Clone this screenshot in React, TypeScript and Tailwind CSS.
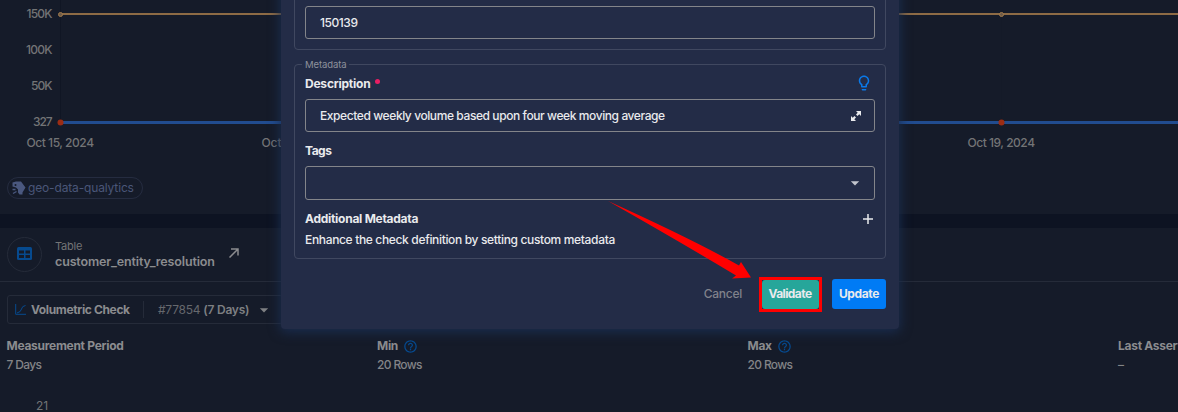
import React from "react";
import { MdOutlineLightbulb, MdHelpOutline, MdArrowDropDown } from "react-icons/md";

const SERIES_X = [60, 1001];

function Chart() {
  return (
    <svg width="1178" height="160" className="block shrink-0 text-[12px] font-medium">
      <line x1="60.5" y1="0" x2="60.5" y2="122" stroke="#101624" />
      <line x1="1001.5" y1="14" x2="1001.5" y2="122" stroke="#141a28" />
      <line x1="60" y1="14" x2="1178" y2="14" stroke="#8d6b45" strokeWidth="2" />
      <line x1="60" y1="122.5" x2="1178" y2="122.5" stroke="#214c8f" strokeWidth="3" />
      {SERIES_X.map((x) => (
        <g key={x}>
          <circle cx={x + 0.5} cy="14.5" r="2" fill="#6e5b48" stroke="#a07a4c" />
          <circle cx={x + 0.5} cy="122.5" r="3" fill="#9c2c13" />
        </g>
      ))}
      <g fill="#737476">
        <text x="26.5" y="18.300" textLength="26">150K</text>
        <text x="26" y="54.300" textLength="26.500">100K</text>
        <text x="31" y="90.300" textLength="21.500">50K</text>
        <text x="33" y="126.300" textLength="19.500">327</text>
      </g>
      <g fill="#737476">
        <text x="26.500" y="146.500" textLength="67.500">Oct 15, 2024</text>
        <text x="261.500" y="146.500" textLength="20">Oct</text>
        <text x="967.500" y="146.500" textLength="67.500">Oct 19, 2024</text>
      </g>
    </svg>
  );
}

function Tag() {
  return (
    <div className="ml-[7px] mt-[17px] flex h-[22px] w-[136px] items-center rounded-full border border-[#252c40] pl-1">
      <svg width="14" height="14" viewBox="0 0 14 14" className="shrink-0">
        <path d="M.5 1.500 4 .5h5L13.500 6.500 10.500 11.500V13.500H7.500L6 11.500V8.500L4 6.500 .5 5.500z" fill="#4a587f" />
        <path d="M.5 8.500h3M1 12.500 4.500 10.500" stroke="#4a587f" strokeWidth="1.400" />
        <circle cx="3.500" cy="4" r="1" fill="#151b29" />
      </svg>
      <span className="ml-[2px] whitespace-nowrap text-[12px] tracking-[-0.15px] text-[#4a5678]">geo-data-qualytics</span>
    </div>
  );
}

function Metric({ label, value, help }: { label: string; value: string; help?: boolean }) {
  return (
    <div className="w-[370.500px] shrink-0 whitespace-nowrap">
      <div className="flex h-[18px] items-center gap-[5px] text-[12px] font-bold tracking-[-0.28px] text-[#8b8c8f]">
        {label}
        {help && <MdHelpOutline size={15} className="text-[#064a8f]" />}
      </div>
      <div className="flex h-5 items-center text-[12px] font-medium tracking-[-0.65px] text-[#838487]">{value}</div>
    </div>
  );
}

function Backdrop() {
  return (
    <div className="flex h-full flex-col">
      <section className="flex h-[214px] shrink-0 flex-col bg-[#151b29]">
        <Chart />
        <Tag />
      </section>
      <div className="h-[14px] shrink-0 bg-[#0d1322]" />
      <section className="flex h-[184px] flex-col bg-[#151b29]">
        <div className="flex h-[54px] shrink-0 items-center border-b border-[#252b39] pl-[7px]">
          <div className="flex size-[35px] items-center justify-center rounded-full border border-[#252b39]">
            <svg width="15" height="13" viewBox="0 0 15 13" className="mb-[2px]">
              <rect width="15" height="13" rx="1.500" fill="#064a8f" />
              <path d="M2 3.500h5v3H2zM8.500 3.500H13v3H8.500zM2 8h5v3H2zM8.500 8H13V11H8.500z" fill="#151b29" />
            </svg>
          </div>
          <div className="ml-[13px] flex w-[160px] flex-col whitespace-nowrap">
            <span className="text-[11px] leading-[15px] tracking-[-0.2px] text-[#737476]">Table</span>
            <span className="text-[12.500px] font-semibold leading-[16px] tracking-[-0.15px] text-[#8b8c8f]">customer_entity_resolution</span>
          </div>
          <svg width="10" height="10" viewBox="0 0 10 10" className="mb-[3px] ml-[14px]" fill="none" stroke="#8b8c8f" strokeWidth="1.500">
            <path d="M.5 9.500 8.500 1.500M2 1h7v6.500" />
          </svg>
        </div>
        <div className="ml-[7px] mt-[13px] flex h-[29px] w-[276px] shrink-0 items-center rounded-[3px] border border-[#252b39] pl-[7px]">
          <svg width="11" height="11" viewBox="0 0 11 11" fill="none" stroke="#064a8f" className="mb-px shrink-0">
            <path d="M.7 0v10.300H11M2 9Q6 8 6.500 5T10.500 1.500" />
          </svg>
          <span className="ml-[5px] w-[99px] shrink-0 whitespace-nowrap text-[12px] font-bold tracking-[-0.36px] text-[#8b8c8f]">Volumetric Check</span>
          <span className="ml-[13px] h-[17px] w-px shrink-0 bg-[#252b39]" />
          <span className="ml-[14px] mt-px w-[92px] shrink-0 whitespace-nowrap text-[12px] tracking-[-0.25px] text-[#66686d]">
            #77854 <b className="font-semibold text-[#7e8083]">(7 Days)</b>
          </span>
          <MdArrowDropDown size={20} className="ml-[4px] mt-px shrink-0 text-[#7e8083]" />
        </div>
        <div className="ml-[6.500px] mt-[13px] flex shrink-0">
          <Metric label="Measurement Period" value="7 Days" />
          <Metric label="Min" value="20 Rows" help />
          <Metric label="Max" value="20 Rows" help />
          <Metric label="Last Asserted" value="–" />
        </div>
        <div className="ml-[36px] mt-[22px] text-[12px] leading-[18px] text-[#737476]">21</div>
      </section>
    </div>
  );
}

function Modal() {
  return (
    <div className="absolute left-[281px] top-[-20px] flex h-[349px] w-[618px] flex-col rounded bg-[#232c47] px-[13px] text-[#e9eaed] shadow-[0_2px_12px_1px_#1a2d50]">
      <div className="h-[70px] shrink-0 rounded border border-[#404860] px-[10px] pt-[25px]">
        <div className="flex h-[33px] items-center rounded-[3px] border border-[#83858a] pl-[14px] pt-px text-[12px] font-medium tracking-[-0.45px]">
          <span>150139</span>
        </div>
      </div>
      <fieldset className="mt-[7px] h-[202px] min-w-0 shrink-0 rounded border border-[#404860] px-[10px]">
        <legend className="-ml-[3px] px-[3px] text-[9.500px] leading-[15px] tracking-[-0.1px] text-[#8d919c]">Metadata</legend>
        <div className="flex h-[25px] items-center text-[12px] font-bold tracking-[-0.22px]">
          <span className="mb-px">Description</span>
          <span className="mb-[7px] ml-[5px] size-[5px] rounded-full bg-[#e91e63]" />
          <MdOutlineLightbulb size={18} className="mb-[3px] ml-auto mr-[2px] text-[#0a79e8]" />
        </div>
        <div className="mt-[2px] flex h-[33px] items-center justify-between rounded-[3px] border border-[#83858a] pl-[14px] pr-[13px] pt-px text-[12px] font-medium tracking-[-0.41px]">
          <span>Expected weekly volume based upon four week moving average</span>
          <svg width="10" height="10" viewBox="0 0 10 10" fill="currentColor">
            <path d="M5 0h5v5L8.300 3.300 6.500 5 5 3.500 6.700 1.700zM0 5l1.700 1.700L3.500 5 5 6.500 3.300 8.300 5 10H0z" />
          </svg>
        </div>
        <div className="mt-[9px] text-[12px] font-bold leading-[20px] tracking-[-0.5px]">Tags</div>
        <div className="mt-[5px] flex h-[34px] items-center justify-end rounded-[3px] border border-[#83858a] pr-[9px]">
          <MdArrowDropDown size={20} className="text-[#c2c5cd]" />
        </div>
        <div className="mt-[9px] flex h-[20px] items-center justify-between text-[12px] font-bold tracking-[-0.27px]">
          <span>Additional Metadata</span>
          <svg width="10" height="10" viewBox="0 0 10 10" className="mb-px mr-[2px]" stroke="currentColor" strokeWidth="1.500">
            <path d="M5 0v10M0 5h10" />
          </svg>
        </div>
        <div className="mt-[1px] text-[12px] font-medium leading-[20px] tracking-[-0.34px]">
          <span>Enhance the check definition by setting custom metadata</span>
        </div>
      </fieldset>
      <div className="mt-[18px] flex h-[34px] items-center justify-end text-[12px] font-semibold">
        <span className="mr-[17px] font-medium tracking-[-0.25px] text-[#80828b]">Cancel</span>
        <div className="mt-px h-[35px] w-[63px] shrink-0 border-[3px] border-[#ff0000]">
          <button className="block h-[29px] w-[57px] rounded-[3px] bg-[#26a69a] pb-px pr-px text-center font-bold tracking-[-0.6px]">Validate</button>
        </div>
        <button className="ml-[10px] h-[30px] w-[54px] rounded-[3px] bg-[#007bf5] text-center font-bold tracking-[-0.35px]">Update</button>
      </div>
    </div>
  );
}

export default function App() {
  return (
    <main className="relative h-[412px] w-[1178px] overflow-hidden bg-[#151b29] font-[Inter,sans-serif]">
      <Backdrop />
      <Modal />
      <svg width="146" height="80" viewBox="0 0 146 80" className="absolute left-[607px] top-[200px]">
        <path d="M1 1Q85 39 132 65.500L134 62 144 77.500 125 78.500 129 75.500Q75 43 1 1z" fill="#ff0000" />
      </svg>
    </main>
  );
}
